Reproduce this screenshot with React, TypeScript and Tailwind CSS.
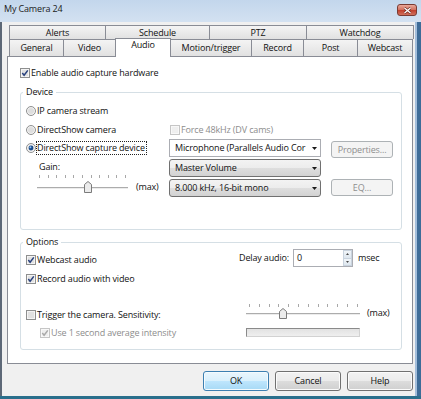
import React from 'react';

const Check = ({ on = false, off = false }: { on?: boolean; off?: boolean }) => (
    <svg width="10" height="10" viewBox="0 0 10 10" className="shrink-0">
        <rect x="0.5" y="0.5" width="9" height="9" fill={off ? '#f8f8f8' : '#f4f4f4'} stroke={off ? '#c6c6c6' : '#8e8f8f'} />
        <rect x="2" y="2" width="6" height="6" fill={off ? '#efefef' : '#e1e1e1'} />
        {on && <path d="M2.3 5.1 4.1 7.2 7.8 2.4" fill="none" stroke={off ? '#a9a9a9' : '#27407d'} strokeWidth="1.5" />}
    </svg>
);

const Radio = ({ on = false }: { on?: boolean }) => (
    <svg width="10" height="10" viewBox="0 0 10 10" className="shrink-0">
        <circle cx="5" cy="5" r="4.5" fill="#f3f3f3" stroke="#8e8f8f" />
        <circle cx="5" cy="5" r="3" fill="#dedede" />
        {on && (
            <>
                <circle cx="5" cy="5" r="2.4" fill="#1a4c8c" />
                <circle cx="4.4" cy="4.3" r="1" fill="#8bbdf0" />
            </>
        )}
    </svg>
);

function RadioRow({ label, on, focus, className = '' }: { label: string; on?: boolean; focus?: boolean; className?: string }) {
    return (
        <div className={`flex h-[14px] items-center pl-[5px] ${className}`}>
            <Radio on={on} />
            <span className={`border pr-[1px] ${focus ? 'border-dotted border-[#222]' : 'border-transparent'}`}>{label}</span>
        </div>
    );
}

interface SliderProps {
    w: number;
    h: number;
    ticks: number[];
    trackY: number;
    thumbX: number;
    thumbTop: number;
    thumbBottom: number;
}

function Slider({ w, h, ticks, trackY, thumbX, thumbTop, thumbBottom }: SliderProps) {
    return (
        <svg width={w} height={h} className="shrink-0">
            {ticks.map((x) => (
                <rect key={x} x={x} y={1} width={1} height={3} fill="#a8a8a8" />
            ))}
            <rect x={0} y={trackY} width={w} height={1} fill="#acacac" />
            <rect x={0} y={trackY + 1} width={w} height={1} fill="#ececec" />
            <path
                d={`M${thumbX + 0.5} ${thumbTop + 3.5} L${thumbX + 4} ${thumbTop + 0.5} L${thumbX + 7.5} ${thumbTop + 3.5} V${thumbBottom - 0.5} H${thumbX + 0.5} Z`}
                fill="#ececec"
                stroke="#7b7b7b"
            />
        </svg>
    );
}

function Combo({ text, flat, className = '' }: { text: string; flat?: boolean; className?: string }) {
    return (
        <div
            className={`flex h-[18px] w-full items-center border pl-[5px] pr-[3px] ${
                flat
                    ? 'border-[#abadb3] bg-white'
                    : 'rounded-[3px] border-[#707070] bg-[linear-gradient(#f3f3f3,#ececec_50%,#dedede_50%,#d2d2d2)]'
            } ${className}`}
        >
            <span className="flex-1 overflow-hidden whitespace-nowrap">{text}</span>
            <svg width="5" height="3" viewBox="0 0 5 3" className="ml-[3px] shrink-0">
                <path d="M0 0H5L2.5 3Z" fill="#1a1a1a" />
            </svg>
        </div>
    );
}

function Btn({ children, disabled, def, className = '' }: { children: React.ReactNode; disabled?: boolean; def?: boolean; className?: string }) {
    let look = 'border-[#707070] bg-[linear-gradient(#f2f2f2,#ebebeb_50%,#dddddd_50%,#cfcfcf)] shadow-[inset_0_0_0_1px_#fbfbfb]';
    if (disabled) look = 'border-[#adb2b5] bg-[#f4f4f4] text-[#8f8f8f]';
    if (def) look = 'border-[#3c7fb1] bg-[linear-gradient(#eaf6fd,#d9f0fc_50%,#bee6fd_50%,#a7d9f5)] shadow-[inset_0_0_0_1px_#f4fbfe]';
    return <div className={`flex items-center justify-center rounded-[3px] border ${look} ${className}`}>{children}</div>;
}

function Spin({ className = '' }: { className?: string }) {
    return (
        <div className={`flex h-[18px] w-[60px] border border-[#abadb3] bg-white ${className}`}>
            <span className="flex-1 pl-[3px] leading-[16px]">0</span>
            <div className="flex w-[9px] flex-col">
                <div className="flex flex-1 items-center justify-center border border-[#c9d3de] bg-[linear-gradient(#f1f5f9,#dde6ee)]">
                    <svg width="3" height="2" viewBox="0 0 3 2"><path d="M0 2H3L1.5 0Z" fill="#4a4a4a" /></svg>
                </div>
                <div className="flex flex-1 items-center justify-center border border-t-0 border-[#c9d3de] bg-[linear-gradient(#f1f5f9,#dde6ee)]">
                    <svg width="3" height="2" viewBox="0 0 3 2"><path d="M0 0H3L1.5 2Z" fill="#4a4a4a" /></svg>
                </div>
            </div>
        </div>
    );
}

const tabBase = 'flex items-center justify-center border border-b-0 border-[#898c95] bg-[linear-gradient(#f4f4f4,#e1e1e1)]';

const GAIN_TICKS = Array.from({ length: 11 }, (_, i) => Math.round(2 + i * 8.6));
const TRIG_TICKS = Array.from({ length: 12 }, (_, i) => Math.round(3 + i * 9.8));

export default function App() {
    return (
        <div className="flex h-[399px] w-[421px] flex-col overflow-hidden bg-[#f0f0f0] font-['Open_Sans',sans-serif] text-[9px] leading-[12px] tracking-[-0.15px] text-[#111]">
            {/* title bar */}
            <div className="flex h-[22px] shrink-0 items-start bg-[linear-gradient(#c3d6ec,#d3e1f1)] pl-[4px]">
                <span className="mt-[3px] text-[#1b1b1b]">My Camera 24</span>
                <div className="ml-auto mr-[4px] mt-[4px] flex h-[12px] w-[20px] items-center justify-center rounded-[3px] border border-[#7a3b33] bg-[linear-gradient(#e9a89a,#d47463_45%,#c2422f_55%,#d0715e)]">
                    <svg width="9" height="7" viewBox="0 0 9 7">
                        <path d="M1.5 1 7.5 6M7.5 1 1.5 6" stroke="#6b2a22" strokeWidth="2.6" />
                        <path d="M1.5 1 7.5 6M7.5 1 1.5 6" stroke="#fff" strokeWidth="1.3" />
                    </svg>
                </div>
            </div>

            <div className="flex min-h-0 flex-1">
                <div className="w-[2px] bg-[#5d6877]" />
                <div className="flex min-w-0 flex-1 flex-col pt-[3px]">
                    {/* tabs, back row */}
                    <div className="ml-[7px] flex h-[14px]">
                        <div className={`${tabBase} w-[97px]`}>Alerts</div>
                        <div className={`${tabBase} -ml-px w-[105px]`}>Schedule</div>
                        <div className={`${tabBase} -ml-px w-[98px]`}>PTZ</div>
                        <div className={`${tabBase} -ml-px w-[108px]`}>Watchdog</div>
                    </div>
                    {/* tabs, front row */}
                    <div className="-mt-px ml-[7px] flex h-[18px] items-end">
                        <div className={`${tabBase} h-[17px] w-[55px]`}>General</div>
                        <div className={`${tabBase} -ml-px h-[17px] w-[53px]`}>Video</div>
                        <div className="relative z-10 -mb-px -ml-px flex h-[19px] w-[56px] justify-center border border-b-0 border-[#898c95] bg-white">Audio</div>
                        <div className={`${tabBase} -ml-px h-[17px] w-[82px]`}>Motion/trigger</div>
                        <div className={`${tabBase} -ml-px h-[17px] w-[53px]`}>Record</div>
                        <div className={`${tabBase} -ml-px h-[17px] w-[55px]`}>Post</div>
                        <div className={`${tabBase} -ml-px h-[17px] w-[56px]`}>Webcast</div>
                    </div>

                    {/* tab page */}
                    <div className="ml-[5px] flex h-[308px] w-[406px] flex-col border border-[#898c95] bg-white pl-[12px]">
                        <div className="mt-[9px] flex h-[14px] items-center gap-[1px]">
                            <Check on />
                            <span>Enable audio capture hardware</span>
                        </div>

                        <fieldset className="mt-[6px] h-[144px] w-[382px] rounded-[3px] border border-[#d5dfe5]">
                            <legend className="ml-[2px] px-[3px]">Device</legend>
                            <div className="flex">
                                <div className="flex w-[148px] flex-col">
                                    <RadioRow className="mt-[6px]" label="IP camera stream" />
                                    <RadioRow className="mt-[5px]" label="DirectShow camera" />
                                    <RadioRow className="mt-[4px]" label="DirectShow capture device" on focus />
                                    <div className="mt-[5px] h-[14px] pl-[18px] leading-[14px]">Gain:</div>
                                    <div className="flex items-start pl-[16px]">
                                        <Slider w={91} h={20} ticks={GAIN_TICKS} trackY={13} thumbX={47} thumbTop={7} thumbBottom={19} />
                                        <span className="ml-[8px] mt-[6px] leading-[14px]">(max)</span>
                                    </div>
                                </div>
                                <div className="flex w-[152px] flex-col">
                                    <div className="mt-[25px] flex h-[14px] items-center gap-[1px] pl-[1px] text-[#8d8d8d]">
                                        <Check off />
                                        <span>Force 48kHz (DV cams)</span>
                                    </div>
                                    <Combo className="mt-[2px]" flat text="Microphone (Parallels Audio Cor" />
                                    <Combo className="mt-[2px]" text="Master Volume" />
                                    <Combo className="mt-[2px]" text="8.000 kHz, 16-bit mono" />
                                </div>
                                <div className="ml-[10px] flex w-[62px] flex-col">
                                    <Btn disabled className="mt-[43px] h-[17px]">Properties...</Btn>
                                    <Btn disabled className="mt-[21px] h-[17px]">EQ...</Btn>
                                </div>
                            </div>
                        </fieldset>

                        <fieldset className="mt-[6px] h-[114px] w-[382px] rounded-[3px] border border-[#d5dfe5]">
                            <legend className="ml-[2px] px-[3px]">Options</legend>
                            <div className="mt-[1px] flex items-start">
                                <div className="mt-[4px] flex h-[14px] w-[200px] items-center gap-[1px] pl-[5px]">
                                    <Check on />
                                    <span>Webcast audio</span>
                                </div>
                                <div className="flex h-[18px] w-[68px] items-center justify-end">Delay audio:</div>
                                <Spin className="ml-[4px]" />
                                <div className="ml-[5px] flex h-[18px] items-center">msec</div>
                            </div>
                            <div className="mt-[5px] flex h-[14px] items-center gap-[1px] pl-[5px]">
                                <Check on />
                                <span>Record audio with video</span>
                            </div>
                            <div className="mt-[17px] flex items-start">
                                <div className="mt-[5px] flex h-[14px] w-[225px] items-center gap-[1px] pl-[5px]">
                                    <Check />
                                    <span>Trigger the camera. Sensitivity:</span>
                                </div>
                                <Slider w={114} h={18} ticks={TRIG_TICKS} trackY={10} thumbX={33} thumbTop={5} thumbBottom={16} />
                                <span className="ml-[7px] mt-[3px] leading-[14px]">(max)</span>
                            </div>
                            <div className="flex items-start">
                                <div className="mt-[4px] flex h-[14px] w-[225px] items-center gap-[1px] pl-[19px] text-[#8d8d8d]">
                                    <Check on off />
                                    <span>Use 1 second average intensity</span>
                                </div>
                                <div className="mt-[6px] h-[9px] w-[114px] border border-[#d2d2d2] border-l-[#8a8a8a] border-t-[#8a8a8a] bg-[linear-gradient(#e2e2e2,#efefef)]" />
                            </div>
                        </fieldset>
                    </div>

                    {/* dialog buttons */}
                    <div className="mt-[7px] flex justify-end gap-[6px] pr-[2px]">
                        <Btn def className="h-[20px] w-[66px]">OK</Btn>
                        <Btn className="h-[20px] w-[66px]">Cancel</Btn>
                        <Btn className="h-[20px] w-[66px]">Help</Btn>
                    </div>
                </div>
                <div className="w-[2px] bg-[#a3bedb]" />
                <div className="w-[4px] bg-[#3e6c98]" />
            </div>
            <div className="h-[3px] shrink-0 bg-[#2a6f8c]" />
        </div>
    );
}
